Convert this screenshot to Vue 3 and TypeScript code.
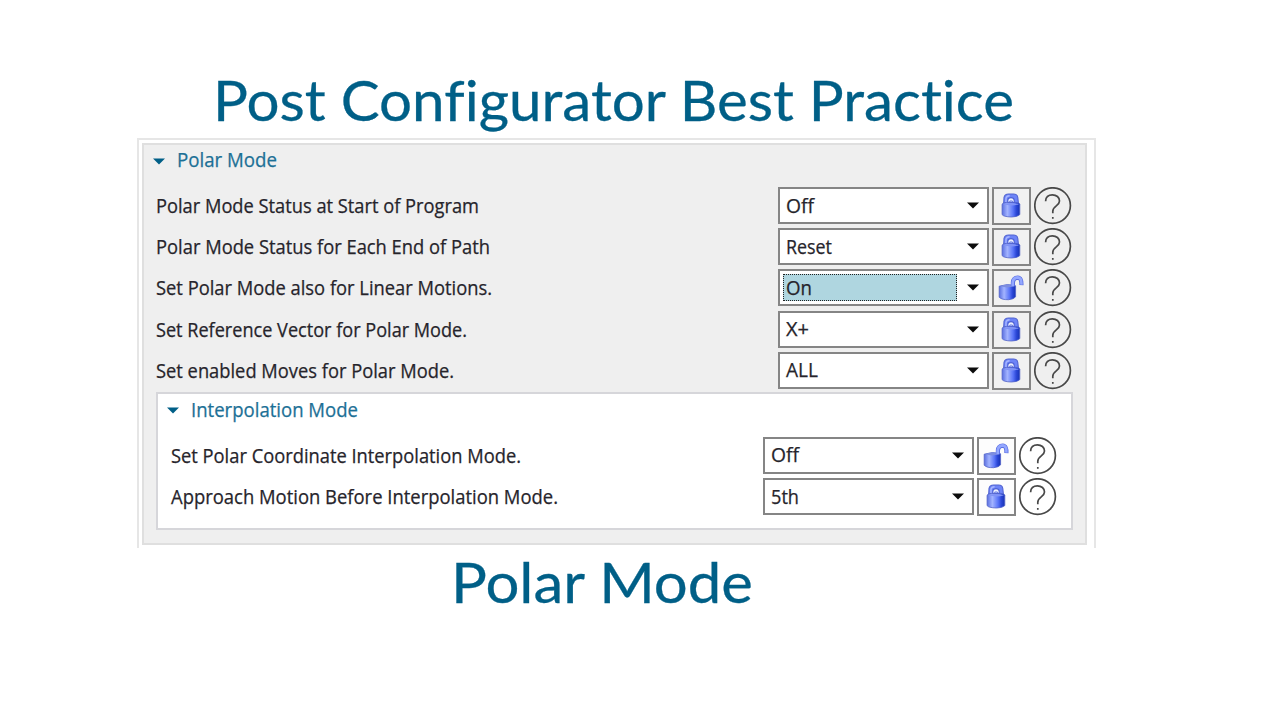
<script setup lang="ts">
interface Setting {
  label: string
  width: number
  value: string
  valueWidth: number
  locked: boolean
  focused?: boolean
}

const polarSettings: Setting[] = [
  { label: 'Polar Mode Status at Start of Program', width: 323, value: 'Off', valueWidth: 28, locked: true },
  { label: 'Polar Mode Status for Each End of Path', width: 334, value: 'Reset', valueWidth: 46, locked: true },
  { label: 'Set Polar Mode also for Linear Motions.', width: 336, value: 'On', valueWidth: 26, locked: false, focused: true },
  { label: 'Set Reference Vector for Polar Mode.', width: 311, value: 'X+', valueWidth: 23, locked: true },
  { label: 'Set enabled Moves for Polar Mode.', width: 298, value: 'ALL', valueWidth: 32, locked: true },
]

const interpolationSettings: Setting[] = [
  { label: 'Set Polar Coordinate Interpolation Mode.', width: 350, value: 'Off', valueWidth: 28, locked: false },
  { label: 'Approach Motion Before Interpolation Mode.', width: 387, value: '5th', valueWidth: 28, locked: true },
]

const groups = [
  { name: 'Polar Mode', nameWidth: 100, rows: polarSettings, nested: false },
  { name: 'Interpolation Mode', nameWidth: 167, rows: interpolationSettings, nested: true },
]
</script>

<template>
  <main class="slide">
    <svg class="defs" width="0" height="0" aria-hidden="true">
      <defs>
        <linearGradient id="body" x1="0" x2="1" y1="0" y2="0">
          <stop offset="0" stop-color="#5a6fe0" />
          <stop offset="0.3" stop-color="#a3b4ff" />
          <stop offset="0.62" stop-color="#5a75f8" />
          <stop offset="0.8" stop-color="#2c48d8" />
          <stop offset="1" stop-color="#1732b2" />
        </linearGradient>
      </defs>
    </svg>

    <svg class="title" width="820" height="78">
      <text x="0" y="61" textLength="801" lengthAdjust="spacingAndGlyphs">Post Configurator Best Practice</text>
    </svg>

    <div class="frame">
      <div class="panel">
        <section v-for="group in groups" :key="group.name" :class="['group', { nested: group.nested }]">
          <header class="heading">
            <svg class="caret" width="12" height="7" viewBox="0 0 12 7"><path d="M0 .5H12L6 6.5Z" /></svg>
            <svg class="text" :width="group.nameWidth + 4" height="28">
              <text x="0" y="20" :textLength="group.nameWidth" lengthAdjust="spacingAndGlyphs">{{ group.name }}</text>
            </svg>
          </header>
          <div v-for="row in group.rows" :key="row.label" class="row">
            <svg class="text label" :width="row.width + 4" height="28">
              <text x="0" y="20" :textLength="row.width" lengthAdjust="spacingAndGlyphs">{{ row.label }}</text>
            </svg>
            <div class="select">
              <div :class="['value', { focused: row.focused }]">
                <svg class="text" :width="row.valueWidth + 4" height="28">
                  <text x="0" y="20.5" :textLength="row.valueWidth" lengthAdjust="spacingAndGlyphs">{{ row.value }}</text>
                </svg>
              </div>
              <svg class="arrow" width="12" height="7" viewBox="0 0 12 7"><path d="M0 .5H12L6 6.5Z" /></svg>
            </div>
            <div class="lock">
              <svg v-if="row.locked" width="35" height="34" viewBox="-.6 -.2 35 34">
                <path d="M9 16L9.4 8.4Q10 4.8 14 4.8H19Q22.8 4.8 23.2 8.4L24 16Z" fill="#6d84f7" stroke="#5365d2" stroke-width="1.1" />
                <path d="M11.4 13V9Q12 6.6 15 6.6" fill="none" stroke="#a9b7ff" stroke-width="1.4" />
                <path d="M13.2 13.4V10.8Q13.6 8.4 16.4 8.4T19.6 10.8V13.4Z" fill="#eceffc" stroke="#4c60d6" stroke-width="1.1" />
                <path d="M15.2 13.4V11.8H17.8V13.4" fill="none" stroke="#6378e4" stroke-width="1" />
                <path d="M7.5 15Q8 13.4 12 13.2H21Q25 13.4 25.2 15V25.4Q23 27.8 17 27.8Q8.8 27.6 7.5 25.4Z" fill="url(#body)" stroke="#5162c8" stroke-width=".8" />
                <path d="M8.5 15.1Q16 12.4 24.4 15Q17 17.4 8.5 15.1Z" fill="#8093f5" />
              </svg>
              <svg v-else width="35" height="34" viewBox="-.6 -.2 35 34">
                <path d="M4.6 15Q12.5 12 21 14.6V25.6Q19.5 28 14 28.5Q6.8 28.6 4.6 26Z" fill="url(#body)" stroke="#5162c8" stroke-width=".8" />
                <path d="M5.6 15.1Q12.5 12.4 20 14.8Q13 17.5 5.6 15.1Z" fill="#7c8de0" />
                <path d="M18.3 15V11.4Q18.6 6.6 23.2 6.4Q27.2 6.6 26.8 14" fill="none" stroke="#5c70e2" stroke-width="4.2" />
                <path d="M18.1 15V11.4Q18.4 6.6 23.2 6.2Q27.2 6.6 26.8 13.4" fill="none" stroke="#93a7ff" stroke-width="2.6" />
              </svg>
            </div>
            <svg class="help" width="38" height="38" viewBox="0 0 38 38">
              <circle cx="18.6" cy="18.6" r="17.8" />
              <path d="M11.6 14.2C11.6 10.2 14.4 7.8 18.4 7.8S25.5 10.3 25.5 14C25.5 19 18.8 18.7 18.8 24.2V26.3" />
              <path d="M18.8 30V31.8" />
            </svg>
          </div>
        </section>
      </div>
    </div>

    <svg class="title subtitle" width="310" height="78">
      <text x="0" y="61" textLength="302" lengthAdjust="spacingAndGlyphs">Polar Mode</text>
    </svg>
  </main>
</template>

<style>
body {
  background: #fff;
}
</style>

<style scoped>
.slide {
  box-sizing: border-box;
  width: 1280px;
  height: 720px;
  padding-top: 60px;
  overflow: hidden;
  background: #fff;
  font-family: 'Open Sans', 'Noto Sans', sans-serif;
}
.slide svg {
  display: block;
  flex: none;
}
.title {
  margin-left: 213px;
  fill: #005f87;
  stroke: #005f87;
  stroke-width: 0.3px;
  font-family: Lato, 'Open Sans', sans-serif;
  font-size: 56.5px;
  font-variant-ligatures: none;
}
.subtitle {
  margin-left: 451px;
  margin-top: -6px;
}
.frame {
  box-sizing: border-box;
  width: 959px;
  height: 410px;
  margin-left: 137px;
  padding: 3px 6px 0 3px;
  border: 2px solid #e6e6e6;
  border-bottom: 0;
}
.panel {
  box-sizing: border-box;
  width: 945px;
  height: 402px;
  border: 2px solid #dfdfdf;
  background: #efefef;
}
.text {
  overflow: visible;
  fill: #26242b;
  stroke: #26242b;
  stroke-width: 0.25px;
  font-size: 19.3px;
}
.heading {
  display: flex;
  align-items: center;
  height: 40px;
  padding: 0 0 0 9px;
}
.heading .text {
  margin-left: 12px;
  margin-top: -8px;
  fill: #1c7096;
  stroke: #1c7096;
}
.caret {
  margin-top: -8px;
  fill: #005f87;
}
.row {
  box-sizing: border-box;
  display: flex;
  align-items: flex-start;
  height: 41.2px;
  padding: 2px 13px 0 12px;
}
.label {
  margin-top: 6px;
}
.select {
  box-sizing: border-box;
  display: flex;
  align-items: center;
  width: 211px;
  height: 37px;
  margin-left: auto;
  padding: 0 8px 0 3px;
  border: 2px solid #858585;
  background: #fff;
}
.value {
  box-sizing: border-box;
  display: flex;
  align-items: center;
  width: 174px;
  height: 27px;
  padding-left: 2px;
  border: 1px solid transparent;
}
.focused {
  border: 1px dotted #222;
  background: #afd6e0;
}
.arrow {
  margin-left: auto;
  fill: #0c0c0c;
}
.lock {
  box-sizing: border-box;
  width: 39px;
  height: 38px;
  margin-left: 3px;
  border: 2px solid #858585;
  background: #f1f1f1;
}
.help {
  margin-left: 3px;
  fill: none;
  stroke: #484848;
  stroke-width: 1.7;
}
.nested {
  box-sizing: border-box;
  width: 917px;
  height: 138px;
  margin: 1px 0 0 12px;
  padding-top: 1px;
  border: 2px solid #d6d6da;
  background: #fff;
}
.nested .row {
  padding-left: 13px;
  padding-right: 14px;
}
.nested .lock {
  background: #fdfdfd;
}
</style>
